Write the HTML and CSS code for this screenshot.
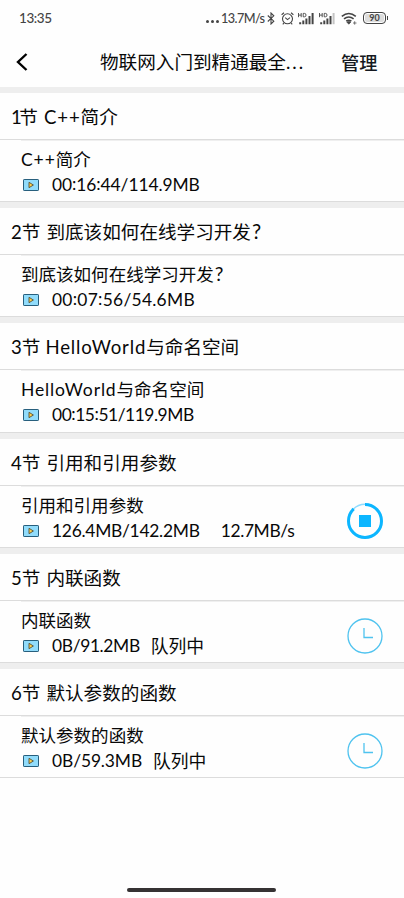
FILE: index.html
```
<!DOCTYPE html>
<html lang="zh-CN">
<head>
<meta charset="utf-8">
<title>下载列表</title>
<link rel="stylesheet" href="styles.css">
</head>
<body>
<svg class="defs" aria-hidden="true">
  <symbol id="video" viewBox="0 0 16 12"><rect x=".5" y=".5" width="15" height="11" rx=".6" fill="#91dcfb" stroke="#285f7d"/><path d="M6 3.3v5.4L10.4 6z" fill="#ffd04a" stroke="#54513a" stroke-width=".9"/></symbol>
  <symbol id="clock" viewBox="0 0 36 36"><circle cx="18" cy="18" r="17" fill="none" stroke="#4fc3ef" stroke-width="1.3"/><path d="M17 10v9.5h9" fill="none" stroke="#4fc3ef" stroke-width="1.3"/></symbol>
  <symbol id="signal" viewBox="0 0 17 13"><path d="M2.2 12.200v-2M5.300 12.200V8.500M8.400 12.200V6.500M11.500 12.200V4" stroke="#444" stroke-width="2"/><path d="M.5 1v4.200M3.200 1v4.200M.5 3.100h2.700M5.200 1.400h1.300q1.500 0 1.500 1.700T6.500 4.800H5.200z" fill="none" stroke="#444" stroke-width=".9"/></symbol>
</svg>
<div class="status">
  <span class="time">13:35</span>
  <span class="dots"><i></i><i></i><i></i></span>
  <span class="speed">13.7M/s</span>
  <svg class="bt" viewBox="0 0 8 13"><path d="M.8 3.500l6 5.700L4 12V1l2.800 2.800-6 5.700" fill="none" stroke="#444" stroke-width="1.100"/></svg>
  <svg class="alarm" viewBox="0 0 13 13"><circle cx="6.500" cy="6.800" r="5" fill="none" stroke="#444" stroke-width="1.100"/><path d="M.6 2.700L3 .8M12.400 2.700L10 .8M4.200 5.600l2.300 2 2.500-2M2.800 11l-1 1.300M10.200 11l1 1.300" fill="none" stroke="#444" stroke-width="1.100"/></svg>
  <svg class="sig" viewBox="0 0 17 13"><use href="#signal"/><path d="M14.600 12.200V1" stroke="#444" stroke-width="2"/></svg>
  <svg class="sig second" viewBox="0 0 17 13"><use href="#signal"/><path d="M14.600 12.200V1" stroke="#c4c4c4" stroke-width="2"/></svg>
  <svg class="wifi" viewBox="0 0 16 13"><path d="M.8 4.300q7-5.600 14 0M3 6.800q4.800-3.700 9.600 0M5.200 9.200q2.600-2 5.200 0" fill="none" stroke="#444" stroke-width="1.600"/><path d="M5.800 10q2-1.200 4 0l-2 2.200zM12 11h3.500M13.700 9.200v3.500" fill="#444" stroke="#444" stroke-width=".7"/></svg>
  <span class="battery">90</span><span class="tip"></span>
</div>
<header class="bar">
  <svg class="back" viewBox="0 0 12 18"><path d="M10.500 1L2 9l8.500 8" fill="none" stroke="#000" stroke-width="2.400"/></svg>
  <h1>物联网入门到精通最全<span class="ell">...</span></h1>
  <span class="manage">管理</span>
</header>
<main>
  <section>
    <h2><span class="n one">1</span>节<span class="l gap cpp">C++</span>简介</h2>
    <div class="item"><div class="info"><p class="name"><span class="l cpp">C++</span>简介</p>
      <p class="meta"><svg class="video"><use href="#video"/></svg><span class="l t1">00<b>:</b>16<b>:</b>44/114.9MB</span></p></div></div>
  </section>
  <section>
    <h2><span class="n">2</span>节<span class="gap">到底该如何在线学习开发</span><span class="l q">?</span></h2>
    <div class="item"><div class="info"><p class="name">到底该如何在线学习开发<span class="l q">?</span></p>
      <p class="meta"><svg class="video"><use href="#video"/></svg><span class="l t2">00<b>:</b>07<b>:</b>56/54.6MB</span></p></div></div>
  </section>
  <section>
    <h2><span class="n">3</span>节<span class="l gap hello">HelloWorld</span>与命名空间</h2>
    <div class="item"><div class="info"><p class="name"><span class="l hello">HelloWorld</span>与命名空间</p>
      <p class="meta"><svg class="video"><use href="#video"/></svg><span class="l t3">00<b>:</b>15<b>:</b>51/119.9MB</span></p></div></div>
  </section>
  <section>
    <h2><span class="n">4</span>节<span class="gap">引用和引用参数</span></h2>
    <div class="item"><div class="info"><p class="name">引用和引用参数</p>
      <p class="meta"><svg class="video"><use href="#video"/></svg><span class="l size">126.4MB/142.2MB</span><span class="l tight">12.7MB/s</span></p></div>
      <svg class="state" viewBox="0 0 36 36"><circle cx="18" cy="18" r="16.700" fill="none" stroke="#8fdcff" stroke-width="1.600"/><circle cx="18" cy="18" r="16.500" fill="none" stroke="#0cb6ff" stroke-width="3" pathLength="100" stroke-dasharray="88 12" transform="rotate(-90 18 18)"/><path d="M12 12h12v12H12z" fill="#0cb6ff"/></svg></div>
  </section>
  <section>
    <h2><span class="n">5</span>节<span class="gap">内联函数</span></h2>
    <div class="item"><div class="info"><p class="name">内联函数</p>
      <p class="meta"><svg class="video"><use href="#video"/></svg><span class="l tight">0B/91.2MB</span><span class="queue">队列中</span></p></div>
      <svg class="state"><use href="#clock"/></svg></div>
  </section>
  <section>
    <h2><span class="n">6</span>节<span class="gap">默认参数的函数</span></h2>
    <div class="item"><div class="info"><p class="name">默认参数的函数</p>
      <p class="meta"><svg class="video"><use href="#video"/></svg><span class="l zero">0B/59.3MB</span><span class="queue">队列中</span></p></div>
      <svg class="state"><use href="#clock"/></svg></div>
  </section>
</main>
<footer><div class="handle"></div></footer>
</body>
</html>
```
FILE: styles.css
```
* { box-sizing: border-box; margin: 0; padding: 0; }
body { width: 404px; height: 898px; display: flex; flex-direction: column; background: #fefefe; color: #080808; font-family: "Noto Sans CJK SC", sans-serif; overflow: hidden; white-space: nowrap; }
svg { flex: none; display: block; }
.defs { width: 0; height: 0; position: absolute; }
.status { height: 36px; flex: none; display: flex; align-items: center; padding-left: 19px; color: #444; font: 500 13px/36px Lato, sans-serif; }
.status > * { flex: none; }
.time { width: 187px; font-size: 13.5px; letter-spacing: -.4px; }
.dots { display: flex; gap: 2px; width: 15px; padding-top: 6px; }
.dots i { width: 3px; height: 3px; border-radius: 50%; background: #444; }
.speed { width: 46px; font-size: 12.7px; letter-spacing: -.6px; }
.bt { width: 8px; height: 13px; }
.alarm { width: 13px; height: 13px; margin-left: 6px; }
.sig { width: 17px; height: 13px; margin-left: 4px; }
.sig.second { margin-left: 4px; }
.wifi { width: 16px; height: 13px; margin-left: 5px; }
.battery { width: 23px; height: 12px; margin-left: 6px; border: 1.5px solid #444; border-radius: 4px; background: #ddd; box-shadow: inset 0 0 0 1px #fff; font: 700 9px/9px Lato, sans-serif; text-align: center; }
.tip { width: 1px; height: 4px; margin-left: 1px; background: #444; }
.bar { height: 51px; flex: none; display: flex; align-items: center; padding-left: 16px; }
.back { width: 12px; height: 18px; }
h1 { width: 241px; margin-left: 72px; font-size: 18.6px; font-weight: 400; line-height: 50px; }
.ell { font-family: Lato, sans-serif; letter-spacing: 2px; }
.manage { font-size: 18.2px; font-weight: 500; color: #141820; line-height: 50px; }
main { flex: none; }
section { height: 115.2px; border-top: 6px solid #eee; display: flex; flex-direction: column; }
h2 { height: 47px; padding-left: 11px; border-bottom: 1px solid #dcdcdc; font-size: 18.6px; font-weight: 400; line-height: 46px; }
.l, .n { font-family: Lato, sans-serif; }
.one { letter-spacing: -2.5px; }
.gap { margin-left: 6px; }
.cpp { letter-spacing: .9px; }
.hello { letter-spacing: .85px; }
h2 .hello { margin-left: 5px; }
.item { flex: 1; display: flex; align-items: flex-start; justify-content: space-between; padding: 6px 21px 0; border-bottom: 1px solid #dcdcdc; background: linear-gradient(#efefef, #efefef) 21px 0 / 100% 1px no-repeat; font-size: 17.55px; }
.name { height: 26px; line-height: 26px; }
.q { margin-left: 1px; font-size: 1.1em; line-height: 1; }
.meta { height: 26px; display: flex; align-items: center; line-height: 26px; }
.video { width: 16px; height: 12px; margin: 0 13px 0 2px; }
.meta .l { font-size: 17.4px; }
.meta b { display: inline-block; font-weight: 400; line-height: 1; transform: translateY(-1.5px); }
.t1 { letter-spacing: -.08px; }
.t2 { letter-spacing: .27px; }
.t3 { letter-spacing: -.45px; }
.size { margin-right: 21px; letter-spacing: -.26px; }
.tight { letter-spacing: -.35px; }
.zero { letter-spacing: -.1px; }
.queue { margin-left: 11px; font-size: 17.8px; line-height: 24px; padding-bottom: 2px; }
.state { width: 36px; height: 36px; margin-top: 11px; }
footer { flex: 1; display: flex; justify-content: center; align-items: flex-end; padding: 0 1px 6px 0; }
.handle { width: 149px; height: 4px; border-radius: 2px; background: #353233; }
```
